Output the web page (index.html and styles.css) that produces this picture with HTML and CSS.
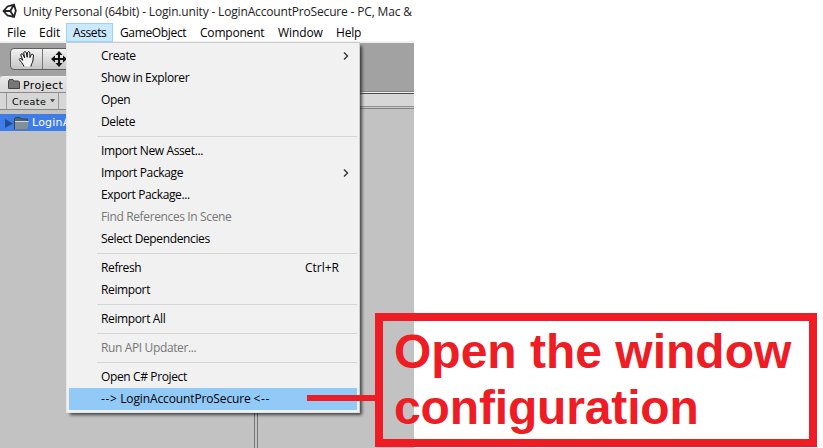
FILE: index.html
```html
<!DOCTYPE html>
<html lang="en">
<head>
<meta charset="utf-8">
<title>Unity Assets menu</title>
<link rel="stylesheet" href="styles.css">
</head>
<body>
<div class="app">
  <header class="titlebar">
    <svg class="logo" width="16" height="16" viewBox="0 0 16 16" fill="none" stroke="#222" stroke-width="1.8"><path d="M1.500 8 5.500 3.500 12 1.700 13.800 7.800 12 14 5.500 12.500ZM1.500 8H8.300M8.300 8 12 1.700M8.300 8 12 14"/></svg>
    <span class="title">Unity Personal (64bit) - Login.unity - LoginAccountProSecure - PC, Mac &amp;</span>
  </header>
  <nav class="menubar">
    <span class="m-file">File</span><span class="m-edit">Edit</span><span class="m-assets">Assets</span><span class="m-go">GameObject</span><span class="m-comp">Component</span><span class="m-win">Window</span><span class="m-help">Help</span>
  </nav>
  <div class="toolbar">
    <div class="tools">
      <span class="tool"><svg width="18" height="18" viewBox="0 0 18 18" fill="#f4f4f4" stroke="#151515" stroke-width="1" stroke-linejoin="round"><path d="M6 16.500C5 13.500 2.500 11.500 1.300 9.500 1.500 8 3 8.300 4.800 10.300L2.800 5C2.800 3.500 4.600 3.300 5.200 4.800L6.600 7.800 5.700 2.700C6 1.300 7.800 1.200 8.300 2.700L9.200 7.300 9.500 2.500C10 1.200 11.800 1.400 11.800 3L12 7.500 13.300 4.500C14.200 3.600 15.600 4.300 15.400 6L14.900 11C14.500 13 13 14 13 16.500"/></svg></span>
      <span class="tool"><svg width="16" height="16" viewBox="0 0 16 16" fill="#111"><path d="M8 0 11.500 4H9V7H12V4.500L16 8 12 11.500V9H9V12H11.500L8 16 4.500 12H7V9H4V11.500L0 8 4 4.500V7H7V4H4.500Z"/></svg></span>
    </div>
  </div>
  <div class="workspace">
    <section class="project">
      <div class="tab"><svg width="12" height="10" viewBox="0 0 12 10"><path d="M.5 9.500V2L1.500.5H5L6 2H10.500L11.500 3V9.500Z" fill="#777" stroke="#444"/></svg><span>Project</span></div>
      <div class="bar"><span class="create">Create<i></i></span></div>
      <div class="row"><svg class="arrow" width="8" height="9" viewBox="0 0 8 9"><path d="M0 0 8 4.500 0 9Z" fill="#234b91"/></svg><svg width="15" height="13" viewBox="0 0 15 13"><path d="M.5 12V2L1.500.5H6L7 2H13.500V12Z" fill="#526371" stroke="#354453"/><path d="M1 5H14.500L13.700 12.500H1Z" fill="#81909b"/><path d="M1 4.500H14.500" stroke="#d1d9df"/></svg><span>LoginA</span></div>
    </section>
    <section class="content"></section>
  </div>
</div>

<div class="menu">
  <div class="item"><span>Create</span><svg class="chev" width="6" height="8" viewBox="0 0 6 8"><path d="M1 .5 4.500 4 1 7.500"/></svg></div>
  <div class="item"><span>Show in Explorer</span></div>
  <div class="item"><span>Open</span></div>
  <div class="item"><span>Delete</span></div>
  <hr>
  <div class="item"><span>Import New Asset...</span></div>
  <div class="item"><span>Import Package</span><svg class="chev" width="6" height="8" viewBox="0 0 6 8"><path d="M1 .5 4.500 4 1 7.500"/></svg></div>
  <div class="item"><span>Export Package...</span></div>
  <div class="item off"><span>Find References In Scene</span></div>
  <div class="item"><span>Select Dependencies</span></div>
  <hr>
  <div class="item"><span>Refresh</span><span class="key">Ctrl+R</span></div>
  <div class="item"><span>Reimport</span></div>
  <hr>
  <div class="item"><span>Reimport All</span></div>
  <hr>
  <div class="item off"><span>Run API Updater...</span></div>
  <hr>
  <div class="item"><span>Open C# Project</span></div>
  <div class="item on"><span><b class="dash">--&gt;</b> <b class="name">LoginAccountProSecure</b> <b class="dash">&lt;--</b></span></div>
</div>

<div class="pointer"></div>
<div class="callout"><div class="line1">Open the window</div><div class="line2">configuration</div></div>
</body>
</html>
```
FILE: styles.css
```css
* { box-sizing: border-box; }
body {
  margin: 0;
  width: 823px;
  height: 448px;
  position: relative;
  overflow: hidden;
  background: #fff;
  font: 12px/16px "Open Sans", "Noto Sans", sans-serif;
  color: #000;
}
.app { width: 414px; height: 448px; overflow: hidden; display: flex; flex-direction: column; }
.titlebar { height: 23px; flex: none; display: flex; padding: 3px 0 0 2px; white-space: nowrap; color: #222; }
.logo { flex: none; margin-right: 5px; }
.title { letter-spacing: -.17px; padding-top: 1px; }
.menubar { height: 20px; flex: none; display: flex; border-bottom: 2px solid #f0f0f0; line-height: 18px; }
.menubar span { height: 19px; padding: 1px 0 0 7px; white-space: nowrap; }
.m-file { width: 32px; }
.m-edit { width: 34px; }
.menubar .m-assets { width: 47px; background: #cce8ff; border: 1px solid #99d1ff; padding: 0 0 0 6px; letter-spacing: -.4px; }
.m-assets { letter-spacing: -.3px; }
.m-go { width: 80px; letter-spacing: -.35px; }
.m-comp { width: 78px; letter-spacing: -.2px; }
.m-win { width: 58px; letter-spacing: -.1px; }
.m-help { letter-spacing: -.2px; }
.toolbar { height: 33px; flex: none; background: #a2a2a2; padding: 5px 0 0 10px; }
.tools { display: flex; width: 80px; height: 22px; border: 1px solid #606060; border-radius: 4px; background: linear-gradient(#f2f2f2, #c5c5c5); }
.tool { width: 32px; border-right: 1px solid #777; display: flex; align-items: center; justify-content: center; }
.workspace { flex: 1; display: flex; background: #c2c2c2; }
.project { width: 258px; border-right: 4px double #777; font: 11px/16px "DejaVu Sans", sans-serif; }
.tab { height: 16px; background: linear-gradient(#e8e8e8, #d8d8d8); border-top: 1px solid #eee; border-top-left-radius: 4px; display: flex; align-items: center; gap: 3px; padding: 2px 0 0 8px; }
.tab svg { margin-top: -3px; }
.tab span { letter-spacing: .35px; }
.bar { height: 18px; border-top: 1px solid #8a8a8a; border-bottom: 1px solid #888; background: #d6d6d6; padding-left: 6px; display: flex; }
.create { width: 53px; border: solid #999; border-width: 0 1px; padding-left: 5px; font-size: 9.5px; line-height: 17px; display: flex; letter-spacing: .45px; }
.create i { margin: 6px 0 0 4px; width: 5px; height: 3px; border: solid transparent; border-width: 3px 2.5px 0; border-top-color: #555; }
.row { margin-top: 4px; height: 17px; background: #3e7de7; color: #fff; display: flex; align-items: center; padding: 1px 0 0 5px; white-space: nowrap; }
.row span { margin-left: 3px; letter-spacing: .2px; }
.arrow { margin-right: 1px; }
.content { flex: 1; background: linear-gradient(#a2a2a2 0 15px, #858585 15px 16px, #eee 16px 17px, #4d4d4d 17px 18px, #d6d6d6 18px 30px, #929292 30px 31px, #c8c8c8 31px 32px, #858585 32px 33px, #c2c2c2 33px); }
.menu {
  position: absolute;
  left: 66px;
  top: 42px;
  width: 294px;
  height: 371px;
  padding: 2px;
  border: 1px solid #ccc;
  border-left-color: #e5e5e5;
  border-bottom-color: #e5e5e5;
  background: #f1f1f1;
  box-shadow: 3px 3px 3px -1px rgba(0, 0, 0, .65);
}
.item { height: 22px; padding: 3px 8px 0 32px; display: flex; justify-content: space-between; white-space: nowrap; letter-spacing: -.37px; }
.off { color: #777; }
.on { background: #91c9f7; }
.on b { font-weight: normal; }
.dash { letter-spacing: .6px; }
.name { letter-spacing: -.12px; }
.key { margin-right: 10px; letter-spacing: 0; }
.chev { margin-top: 4px; fill: none; stroke: #333; stroke-width: 1.4; }
.menu hr { height: 1px; margin: 3px 0 3px 28px; border: 0; background: #d5d5d5; }
.pointer { position: absolute; left: 307px; top: 395px; width: 70px; height: 6px; background: #ee1c24; }
.callout {
  position: absolute;
  left: 375px;
  top: 313px;
  width: 442px;
  height: 134px;
  border: 8px solid #ee1c24;
  padding: 3px 0 0 11px;
  color: #ee1c24;
  font: bold 48px/56px "Liberation Sans", Arial, sans-serif;
  white-space: nowrap;
}
.line2 { letter-spacing: -.15px; }
```
